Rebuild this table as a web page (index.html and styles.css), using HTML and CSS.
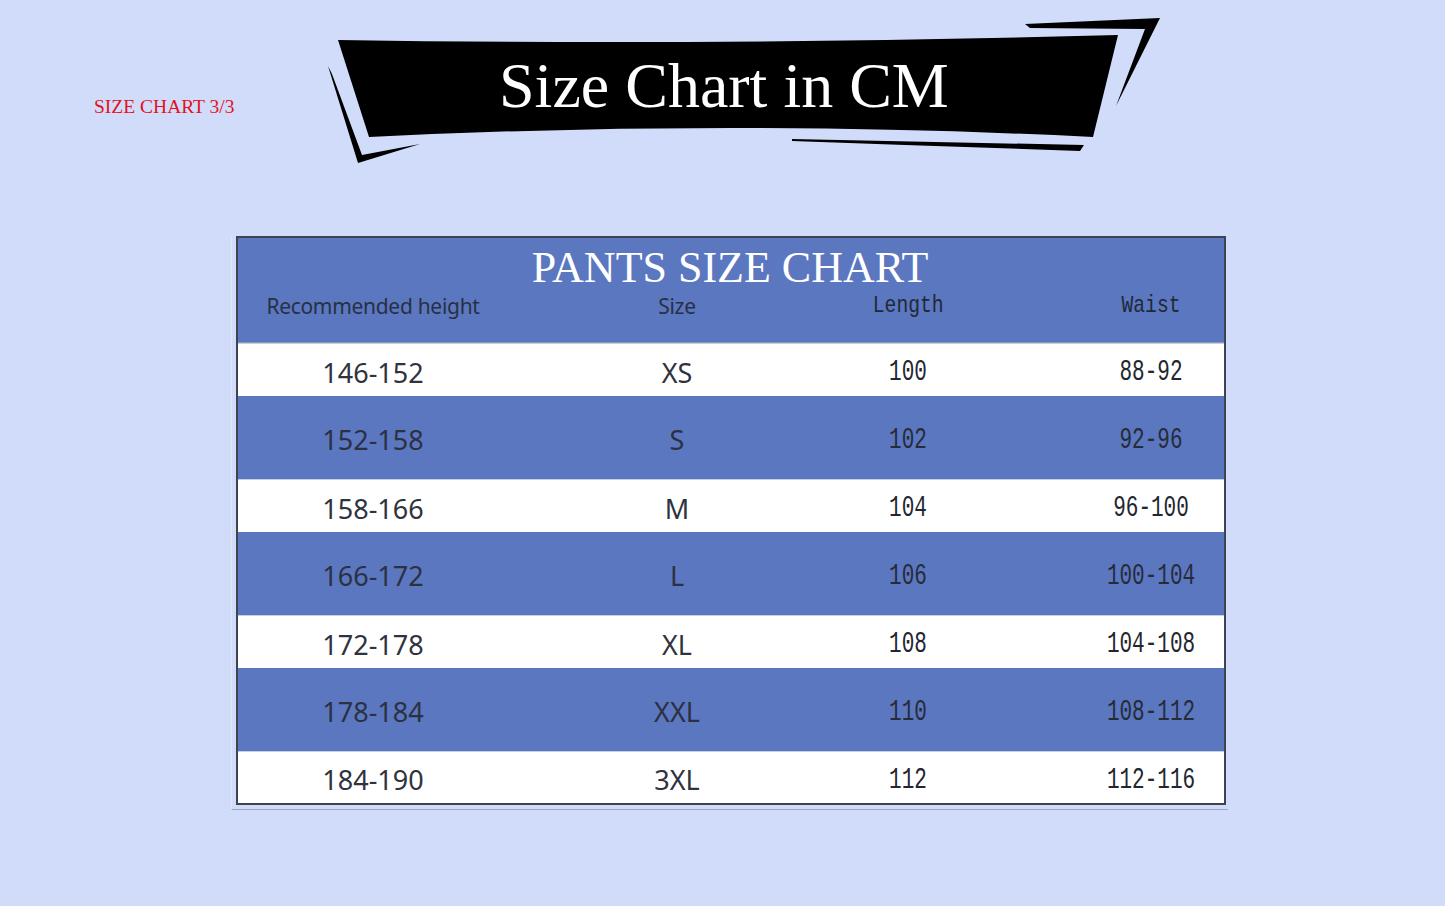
FILE: index.html
```html
<!DOCTYPE html>
<html lang="en">
<head>
<meta charset="utf-8">
<title>Size Chart in CM</title>
<link rel="stylesheet" href="styles.css">
</head>
<body>
<div class="top">
  <div class="label">SIZE CHART 3/3</div>
  <div class="banner">
    <svg class="banner-art" viewBox="328 15 835 152" width="835" height="152" aria-hidden="true">
      <path d="M338,40 Q720,46 1118,35 L1093,137 Q730,119 369,137 Z" fill="#000"/>
      <path d="M328,66 L358,163 L420,144 L362,155 L332,74 Z" fill="#000"/>
      <path d="M1025,24 L1160,18 L1116,106 L1145,29 L1030,28 Z" fill="#000"/>
      <path d="M792,139 L1084,145 L1080,151 L905,145 L792,141 Z" fill="#000"/>
    </svg>
    <div class="banner-title">Size Chart in CM</div>
  </div>
</div>

<div class="frame">
  <div class="chart">
    <div class="chart-head">
      <div class="chart-title">PANTS SIZE CHART</div>
      <div class="grid head-row">
        <div class="c c1 sans">Recommended height</div>
        <div class="c c2 sans">Size</div>
        <div class="c c3"><span class="mono-h">Length</span></div>
        <div class="c c4"><span class="mono-h">Waist</span></div>
      </div>
    </div>
    <div class="grid row light"><div class="c c1 v">146-152</div><div class="c c2 v">XS</div><div class="c c3"><span class="mono">100</span></div><div class="c c4"><span class="mono">88-92</span></div></div>
    <div class="grid row dark"><div class="c c1 v">152-158</div><div class="c c2 v">S</div><div class="c c3"><span class="mono">102</span></div><div class="c c4"><span class="mono">92-96</span></div></div>
    <div class="grid row light"><div class="c c1 v">158-166</div><div class="c c2 v">M</div><div class="c c3"><span class="mono">104</span></div><div class="c c4"><span class="mono">96-100</span></div></div>
    <div class="grid row dark"><div class="c c1 v">166-172</div><div class="c c2 v">L</div><div class="c c3"><span class="mono">106</span></div><div class="c c4"><span class="mono">100-104</span></div></div>
    <div class="grid row light"><div class="c c1 v">172-178</div><div class="c c2 v">XL</div><div class="c c3"><span class="mono">108</span></div><div class="c c4"><span class="mono">104-108</span></div></div>
    <div class="grid row dark"><div class="c c1 v">178-184</div><div class="c c2 v">XXL</div><div class="c c3"><span class="mono">110</span></div><div class="c c4"><span class="mono">108-112</span></div></div>
    <div class="grid row light last"><div class="c c1 v">184-190</div><div class="c c2 v">3XL</div><div class="c c3"><span class="mono">112</span></div><div class="c c4"><span class="mono">112-116</span></div></div>
  </div>
</div>
</body>
</html>
```

FILE: styles.css
```css
html, body {
  margin: 0;
  padding: 0;
}
body {
  background: #d0dcf9;
  width: 1445px;
  height: 906px;
  overflow: hidden;
  font-family: "Noto Sans", "Liberation Sans", sans-serif;
}

.top {
  display: flex;
  align-items: flex-start;
  padding-left: 94px;
  height: 167px;
}
.label {
  flex: 0 0 234px;
  margin-top: 97px;
  font-family: "Liberation Serif", serif;
  font-size: 19.5px;
  line-height: 20px;
  color: #e3121c;
  white-space: nowrap;
}
.banner {
  display: grid;
  margin-top: 15px;
  width: 835px;
  height: 152px;
}
.banner-art,
.banner-title {
  grid-area: 1 / 1;
}
.banner-art {
  display: block;
}
.banner-title {
  align-self: start;
  justify-self: start;
  padding-left: 171px;
  padding-top: 38px;
  font-family: "Liberation Serif", serif;
  font-size: 64px;
  line-height: 65px;
  color: #fff;
  white-space: nowrap;
}

.frame {
  margin-top: 69px;
  margin-left: 231px;
  width: 990px;
  padding: 0 2px 4px 4px;
  border-left: 1px solid #e2e7f6;
  border-bottom: 1px solid #9ca4bb;
}
.chart {
  width: 986px;
  border: 2px solid #3e4352;
  background: #5b77c0;
}

.chart-head {
  height: 105px;
  box-sizing: border-box;
  padding-top: 8px;
  border-bottom: 1px solid #8a97bd;
  background: #5b77c0;
}
.chart-title {
  text-align: center;
  font-family: "Liberation Serif", serif;
  font-size: 44px;
  line-height: 44px;
  color: #fff;
  padding-right: 2px;
  white-space: nowrap;
}

.grid {
  display: grid;
  grid-template-columns: 270px 338px 124px 1fr;
  align-items: center;
}
.c {
  text-align: center;
  white-space: nowrap;
}
.c4 {
  padding-left: 108px;
}

.head-row {
  margin-top: 2px;
  height: 28px;
  color: #283045;
}
.sans {
  font-size: 21px;
  line-height: 22px;
  letter-spacing: -0.3px;
}
.mono-h {
  display: inline-block;
  font-family: "Liberation Mono", "DejaVu Sans Mono", monospace;
  font-size: 24px;
  line-height: 24px;
  transform: scaleX(0.82);
  color: #222837;
}

.row {
  box-sizing: border-box;
  padding-top: 4px;
  color: #30333d;
}
.row.light {
  height: 53px;
  background: #fff;
  border-top: 1px solid #c8cfe0;
}
.row.dark {
  height: 83px;
  background: #5b77c0;
  color: #2c3142;
}
.row.last {
  height: 52px;
}
.v {
  font-size: 27px;
  line-height: 27px;
}
.mono {
  display: inline-block;
  font-family: "Liberation Mono", "DejaVu Sans Mono", monospace;
  font-size: 30px;
  line-height: 30px;
  transform: scaleX(0.7);
  color: #23262e;
}
.row.dark .mono {
  color: #262b3a;
}
```
